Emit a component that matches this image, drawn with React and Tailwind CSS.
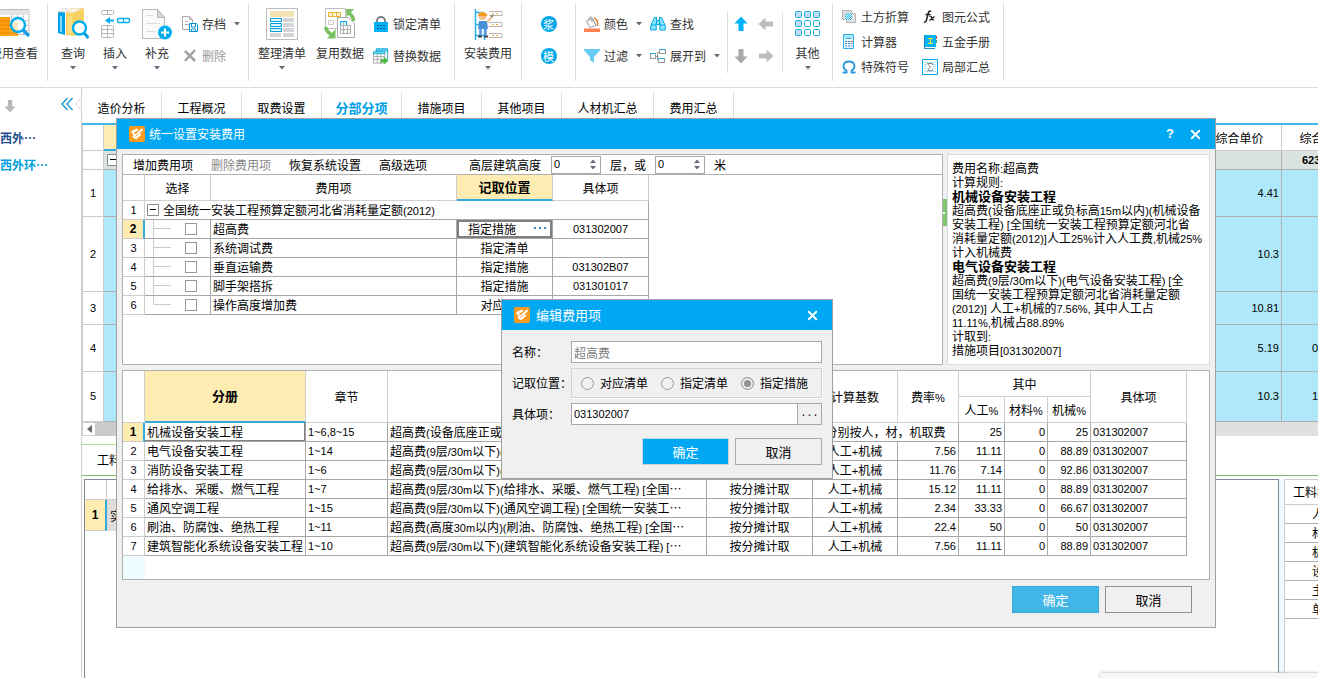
import React, { useState } from "react";
import { X } from "lucide-react";

/* ---------- text helper: Latin runs are set one size smaller than the CJK runs ---------- */
function Mixed({ children }) {
  return String(children)
    .split(/([\x20-\x7e]+)/)
    .map((run, i) =>
      i % 2 ? (
        <span key={i} className="font-['Liberation_Sans',sans-serif] text-[11px] leading-none">
          {run}
        </span>
      ) : (
        run
      )
    );
}

/* ---------- icons ---------- */
const Caret = ({ className = "" }) => (
  <svg className={`h-[4px] w-[6px] shrink-0 ${className}`} viewBox="0 0 6 4" fill="#666a78">
    <path d="M0 0h6L3 3.6z" />
  </svg>
);

const CostViewIcon = () => (
  <svg width="34" height="32" viewBox="0 0 34 32">
    <path d="M1 1.5h31v25H1z" fill="#fff" stroke="#bbb" />
    <path d="M1 2h31v5H1z" fill="#e4e4e0" />
    <path d="M1 12.5h31M1 17.5h31M1 22.5h31M14.5 7v20M20.500 7v20M26.500 7v20" stroke="#ccc" />
    <path d="M2 9h11v19H2z" fill="#ff9f0f" />
    <path d="M12 14h9v14h-9z" fill="#ffa820" />
    <path d="M2 13h11M2 17h11M2 21h19M2 25h19" stroke="#e88800" />
    <circle cx="21" cy="17" r="7" fill="#fff" fillOpacity=".75" stroke="#00aeef" strokeWidth="2.4" />
    <path d="M26 22l6 6" stroke="#1b9de0" strokeWidth="3.2" />
  </svg>
);
const QueryIcon = () => (
  <svg width="32" height="32" viewBox="0 0 32 32">
    <path d="M1 4h7v23l-7-2z" fill="#00a4e4" />
    <path d="M3 8h2v16l-2-.5z" fill="#7fdcff" />
    <path d="M1 4l5-4h5L8 4z" fill="#f4f4f4" stroke="#ccc" strokeWidth=".6" />
    <path d="M9 5h8v23l-8-1z" fill="#ffd666" />
    <path d="M9 5l6-5h11l-8 5z" fill="#f8f4e8" stroke="#e8b93c" strokeWidth=".6" />
    <path d="M17 5l10-5v24l-10 4z" fill="#f9cf62" />
    <path d="M11 9h4v16h-4z" fill="#ffe08a" />
    <circle cx="22.500" cy="20" r="6.500" fill="#fff" stroke="#00aeef" strokeWidth="2.400" />
    <path d="M27 25l4.500 5" stroke="#00a0e0" strokeWidth="3" />
  </svg>
);
const InsertIcon = () => (
  <svg width="32" height="32" viewBox="0 0 32 32" fill="none">
    <rect x="2.500" y="2.500" width="12" height="4" rx="1" stroke="#b5b5b5" />
    <path d="M8.500 2.500v4" stroke="#b5b5b5" />
    <rect x="2.500" y="17.500" width="12" height="12" rx="1" stroke="#b5b5b5" />
    <path d="M8.500 17.500v12M2.500 21.500h12M2.500 25.500h12" stroke="#b5b5b5" />
    <rect x="18.500" y="10.500" width="12" height="4" rx="1" stroke="#00aeef" strokeWidth="1.300" />
    <path d="M24.500 10.500v4" stroke="#00aeef" />
    <path d="M15 12.500h-5" stroke="#00aeef" strokeWidth="2" />
    <path d="M6 12.500l5-3.500v7z" fill="#00aeef" />
  </svg>
);
const SupplementIcon = () => (
  <svg width="32" height="32" viewBox="0 0 32 32" fill="none">
    <path d="M1.500 1.500h15l7 8v21h-22z" fill="#fafafa" stroke="#b8b8b8" />
    <path d="M16.500 1.500l7 8h-7z" fill="#d8d8d8" stroke="#b8b8b8" />
    <path d="M5 7.500h7M5 15.500h14M5 23.500h10" stroke="#ddd" />
    <circle cx="24" cy="24.500" r="7" fill="#00aeef" />
    <path d="M20 24.500h8M24 20.500v8" stroke="#fff" strokeWidth="2" />
  </svg>
);
const ArchiveIcon = () => (
  <svg width="16" height="16" viewBox="0 0 16 16" fill="none">
    <path d="M.5.5h7l3 3v10H.5z" fill="#fff" stroke="#aaa" />
    <path d="M7.500.5v3h3M3 5.500h3M3 8.500h4" stroke="#aaa" />
    <path d="M7.500 7.500h7l1 1v7h-8z" fill="#fff" stroke="#0096d0" />
    <path d="M9.500 8v3h4V8M9.500 15v-2h4v2" stroke="#0096d0" />
  </svg>
);
const DeleteIcon = () => (
  <svg width="16" height="16" viewBox="0 0 16 16" fill="none">
    <path d="M3 3l10 10M13 2L3 13" stroke="#a3a3a3" strokeWidth="2.500" />
  </svg>
);
const TidyIcon = () => (
  <svg width="32" height="32" viewBox="0 0 32 32" fill="none">
    <path d="M.5.5h31v31H.5z" fill="#fff" stroke="#bbb" />
    <path d="M4 3h24v6H4z" fill="#f3e3b4" />
    <path d="M17 10h11v4H17zM17 15h11v4H17zM17 20h11v4H17zM4 25h11v4H4zM17 25h11v4H17z" fill="#d4d4d8" />
    <path d="M4.500 10.500h11v3h-11zM4.500 15.500h11v3h-11zM4.500 20.500h11v3h-11z" fill="#dff6ff" stroke="#009fe0" />
  </svg>
);
const ReuseIcon = () => (
  <svg width="32" height="32" viewBox="0 0 32 32" fill="none">
    <path d="M1.500.5h20v20h-20z" fill="#fff" stroke="#bbb" />
    <path d="M4.500 4.500h12v4h-12zM8.500 4.500v4M12.500 4.500v4" fill="#fff3cf" stroke="#f0b030" />
    <path d="M4.500 12.500h5v4h-5z" stroke="#ccc" />
    <path d="M13.500 9.500h11l6 6v14h-17z" fill="#fff" stroke="#aaa" />
    <path d="M16.500 13.500h6v4h-6z" fill="#dff6ff" stroke="#00aeef" />
    <path d="M16.500 17.500h10v8h-10zM16.500 21.500h10M19.500 13.500v12M23.500 17.500v8" stroke="#b0b0b0" />
    <path d="M29.500 13c0-4-1.500-6-5-8" stroke="#78c060" strokeWidth="3.500" />
    <path d="M22 1h8l-7.500 8z" fill="#78c060" />
    <path d="M1.500 19c1 4 3 6 6 7.500" stroke="#78c060" strokeWidth="3.500" />
    <path d="M11.500 21v9.500H3z" fill="#78c060" />
  </svg>
);
const LockIcon = () => (
  <svg width="16" height="16" viewBox="0 0 16 16" fill="none">
    <path d="M4 7V5a4 4 0 018 0v2" stroke="#747a84" strokeWidth="1.800" />
    <path d="M1 6h14v10H1z" fill="#00b0f8" />
    <path d="M4 9.500h2M7 9.500h2M10 9.500h2M4 12.500h2M7 12.500h2M10 12.500h2" stroke="#0a5c88" />
  </svg>
);
const ReplaceIcon = () => (
  <svg width="17" height="17" viewBox="0 0 17 17" fill="none">
    <path d="M3.500.5h12v11h-12z" fill="#fff" stroke="#2ba8c8" />
    <path d="M3.500.5h12v2h-12z" fill="#9ce4f8" stroke="#00a8d8" />
    <path d="M.5 4.500h12v11H.5z" fill="#fff" stroke="#aaa" />
    <path d="M.5 3.500h12v2H.5z" fill="#9ce4f8" stroke="#00a8d8" />
    <path d="M.5 8.500h12M.5 11.500h12M4.500 6v9M8.500 6v9" stroke="#aaa" />
    <path d="M7.500 16c0-3 1-4.500 4-4.500V9l5 4-5 4v-2.500c-2 0-3 .5-4 1.500z" fill="#4cb83c" />
  </svg>
);
const InstallIcon = () => (
  <svg width="32" height="32" viewBox="0 0 32 32" fill="none">
    <path d="M3.500 1v31M12.500 20v12M3 4.500h9M3 16.500h4M3 27.500h10" stroke="#28b4ea" strokeWidth="1.500" />
    <path d="M17 3.500h13v4H17M17 14.500h13v4H17M17 25.500h13v4H17" stroke="#b5b5b5" />
    <path d="M20 5.500h2M24 5.500h2M20 16.500h2M24 16.500h2M20 27.500h2M24 27.500h2" stroke="#f0b030" />
    <circle cx="10.500" cy="8" r="4" fill="#f3c08c" />
    <path d="M6 8c0-5 9-5 9.500 0z" fill="#f59a1c" />
    <path d="M7 13h8l1 8H6z" fill="#4a90d8" />
    <path d="M15 14l5-5" stroke="#f3c08c" strokeWidth="2" />
    <path d="M19 9l2-2" stroke="#888" strokeWidth="2" />
    <path d="M8.500 21v7M13.500 21v7" stroke="#5a9ae0" strokeWidth="2.600" />
    <path d="M6 28.500h4M12 28.500h4" stroke="#444" strokeWidth="2" />
  </svg>
);
const ColorIcon = () => (
  <svg width="16" height="16" viewBox="0 0 16 16" fill="none">
    <path d="M2.500 5l6-2.500 3.500 7-6 2z" fill="#fff" stroke="#999" />
    <path d="M5 4V2.500C5 .5 8 .5 8 2.500V6" stroke="#888" />
    <path d="M10 2c3 1 4 4 3.500 8" stroke="#e08030" strokeWidth="1.500" />
    <path d="M0 12.500h16V16H0z" fill="#ff7f50" />
  </svg>
);
const FilterIcon = () => (
  <svg width="16" height="16" viewBox="0 0 16 16">
    <path d="M0 1h16v1.500L10 9v6l-4-3V9L0 2.500z" fill="#68ccf0" />
  </svg>
);
const FindIcon = () => (
  <svg width="16" height="16" viewBox="0 0 16 16" fill="#8ce4ff" stroke="#00a8e0">
    <path d="M4.500 1.500h2v5l-1 3h-4V8zM11.500 1.500h-2v5l1 3h4V8z" />
    <path d="M.8 9h5.400v5H.8zM9.800 9h5.400v5H9.800zM6.500 4.500h3v4h-3z" />
  </svg>
);
const ExpandIcon = () => (
  <svg width="16" height="16" viewBox="0 0 16 16" fill="#fff">
    <path d="M6 8.500h2.500M7.500 4.500h2M7.500 4.500v7.500h2" stroke="#999" fill="none" />
    <rect x=".5" y="5.500" width="5" height="5" stroke="#999" />
    <rect x="9.500" y="1.500" width="6" height="4" stroke="#999" />
    <rect x="8.500" y="10.500" width="6" height="4" stroke="#999" />
    <path d="M0 5.500h6M9 1.500h7M8 10.500h7" stroke="#25a8dc" />
  </svg>
);
const Arrow = ({ color, turn = "" }) => (
  <svg width="14" height="16" viewBox="0 0 14 16" fill={color} className={turn}>
    <path d="M7 .5l6.500 7H9.500V15h-5V7.500h-4z" />
  </svg>
);
const GridIcon = () => (
  <svg width="26" height="26" viewBox="0 0 26 26" stroke="#18a8e0">
    {[0, 9, 18].map((y) =>
      [0, 9, 18].map((x) => (
        <rect key={`${x}-${y}`} x={x + 0.5} y={y + 0.5} width="6" height="6" rx="1" fill={x === 0 || y === 0 ? "#c4dcf0" : "#fff"} />
      ))
    )}
  </svg>
);
const EarthIcon = () => (
  <svg width="16" height="16" viewBox="0 0 16 16" fill="none">
    <path d="M1.500 1.500h9v9h-9z" fill="#ddd" stroke="#b4b4b4" />
    <path d="M5.500 4.500h9v9h-9z" fill="#e4e4e4" stroke="#b4b4b4" />
    <path d="M4 4h7v7H4z" fill="#e8faff" />
    <path d="M4 6l2-2M4 8l4-4M4 10l6-6M5 11l6-6M7 11l4-4M9 11l2-2" stroke="#20b4ec" />
  </svg>
);
const CalcIcon = () => (
  <svg width="16" height="16" viewBox="0 0 16 16" fill="none">
    <path d="M2.500.5h10v14h-10z" fill="#eef8ff" stroke="#2cb0ec" />
    <path d="M3 1h9v3H3z" fill="#a8e4fa" />
    <path d="M4.500 4.500h6" stroke="#2cb0ec" />
    <path d="M4 7.500h2M7 7.500h2M4 9.500h2M7 9.500h2M10 9.500h1.500M4 12h2M7 12h2M10 12h1.500" stroke="#3c88d8" />
    <path d="M10 7.500h2" stroke="#f05040" />
  </svg>
);
const OmegaIcon = () => (
  <svg width="16" height="16" viewBox="0 0 16 16" fill="none" stroke="#2a98d8" strokeWidth="1.800">
    <path d="M1.500 13.500h4v-2C1 9 1.500 2.500 8 2.500s7 6.500 2.500 9v2h4" />
  </svg>
);
const FxIcon = () => (
  <svg width="16" height="16" viewBox="0 0 16 16" fill="none" stroke="#222">
    <path d="M9 2.500C7.500 1.500 6.500 2.500 6 5L4.500 11c-.5 2-1.500 2.500-2.500 1.800M3.500 5.500h5" strokeWidth="1.500" />
    <path d="M7.500 7.500c1.500-.8 2 0 2.300 1.500s.7 2.500 2.200 1.500M12.500 7.500L7.500 11.500" strokeWidth="1.300" />
  </svg>
);
const ManualIcon = () => (
  <svg width="16" height="16" viewBox="0 0 16 16" fill="none">
    <path d="M2 1h12v12H2z" fill="#00b4f8" />
    <path d="M2.500 1v13.500H13" stroke="#1a8cc0" />
    <path d="M6 4.500h5M8.500 4.500v5M6 9.500h5" stroke="#ffe838" strokeWidth="1.200" />
    <path d="M14.500 2v3" stroke="#e04040" />
    <path d="M14.500 6v3" stroke="#30b070" />
  </svg>
);
const SumIcon = () => (
  <svg width="16" height="16" viewBox="0 0 16 16" fill="none">
    <path d="M.5.5h15v15H.5z" fill="#fff" stroke="#00a8ec" />
    <path d="M2 3.500h12M2 5.500h3M11 5.500h3M2 7.500h3M11 7.500h3M2 9.500h3M11 9.500h3M2 12.500h12" stroke="#a8e0f4" />
    <path d="M10.500 6V4.500h-5L8.500 8l-3 3.500h5V10" stroke="#8a8a8a" />
  </svg>
);
const AppIcon = () => (
  <svg className="h-4 w-4 shrink-0" viewBox="0 0 16 16" fill="none">
    <rect width="16" height="16" rx="2" fill="#fa9a1e" />
    <path d="M2.500 5L8 2.500 9.500 4 5 6.800l.8 1.400L9 6.500l3.500 2L7 13.500 3.500 11l1-2.500L2.500 7z" fill="#fff" />
    <path d="M13.500 3L8 8.500" stroke="#fff" strokeWidth="2" />
    <path d="M6.500 10.500l3-2.500" stroke="#fa9a1e" />
  </svg>
);
const CollapseIcon = () => (
  <svg width="12" height="14" viewBox="0 0 12 14" fill="none" stroke="#1a9ccc" strokeWidth="1.400">
    <path d="M6.500 1l-5.500 6 5.500 6M11.500 1L6 7l5.500 6" />
  </svg>
);
const Minus = ({ className = "" }) => (
  <svg className={`h-3 w-3 shrink-0 ${className}`} viewBox="0 0 12 12" fill="none">
    <path d="M.5.5h11v11H.5z" fill="#fff" stroke="#8c8c8c" />
    <path d="M3 5.500h6" stroke="#000" />
  </svg>
);

/* ---------- ribbon ---------- */
function BigButton({ icon, label, caret = true, className = "w-[42px]" }) {
  return (
    <button type="button" className={`flex shrink-0 flex-col items-center pt-2 ${className}`}>
      <span className="flex h-8 items-center justify-center">{icon}</span>
      <span className="mt-1 leading-[18px] whitespace-nowrap">{label}</span>
      {caret && <Caret className="mt-1" />}
    </button>
  );
}
function SmallButton({ icon, label, caret, muted }) {
  return (
    <button type="button" className={`flex h-5 items-center gap-1 whitespace-nowrap ${muted ? "text-[#999]" : ""}`}>
      <span className="flex w-4 shrink-0 justify-center">{icon}</span>
      <span>{label}</span>
      {caret && <Caret className="ml-1" />}
    </button>
  );
}
const Group = ({ className = "", children }) => (
  <div className={`flex h-[78px] shrink-0 border-r border-[#dcdcdc] ${className}`}>
    <div className="-mt-[3px] flex">{children}</div>
  </div>
);
const Stack = ({ className = "", children }) => (
  <div className={`flex flex-col gap-3 pt-[14px] ${className}`}>{children}</div>
);
const ShortRule = () => <div className="mt-3 h-[61px] w-px bg-[#dcdcdc]" />;

function Ribbon() {
  return (
    <header className="flex h-[88px] shrink-0 overflow-hidden border-b border-[#dcdcdc] pt-[3px] text-[#333]">
      <Group className="w-12 justify-end pr-[9px]">
        <BigButton icon={<CostViewIcon />} label="费用查看" caret={false} className="w-12" />
      </Group>
      <Group className="w-[201px] pl-1">
        <BigButton icon={<QueryIcon />} label="查询" />
        <BigButton icon={<InsertIcon />} label="插入" />
        <BigButton icon={<SupplementIcon />} label="补充" />
        <Stack className="pl-1">
          <SmallButton icon={<ArchiveIcon />} label="存档" caret />
          <SmallButton icon={<DeleteIcon />} label="删除" muted />
        </Stack>
      </Group>
      <Group className="w-[206px] pl-1">
        <BigButton icon={<TidyIcon />} label="整理清单" className="w-[58px]" />
        <BigButton icon={<ReuseIcon />} label="复用数据" caret={false} className="w-[58px]" />
        <Stack className="pl-1">
          <SmallButton icon={<LockIcon />} label="锁定清单" />
          <SmallButton icon={<ReplaceIcon />} label="替换数据" />
        </Stack>
      </Group>
      <Group className="w-[67px]">
        <BigButton icon={<InstallIcon />} label="安装费用" className="w-[66px]" />
      </Group>
      <Group className="w-[54px] justify-center">
        <Stack>
          {["浆", "模"].map((c) => (
            <button key={c} type="button" className="flex h-5 items-center">
              <span className="flex h-4 w-4 items-center justify-center rounded-full bg-[#00a8e8] text-[11px] leading-4 text-white">{c}</span>
            </button>
          ))}
        </Stack>
      </Group>
      <Group className="w-[257px] pl-2">
        <Stack className="w-[66px]">
          <SmallButton icon={<ColorIcon />} label="颜色" caret />
          <SmallButton icon={<FilterIcon />} label="过滤" caret />
        </Stack>
        <Stack className="w-[77px]">
          <SmallButton icon={<FindIcon />} label="查找" />
          <SmallButton icon={<ExpandIcon />} label="展开到" caret />
        </Stack>
        <ShortRule />
        <div className="grid w-[54px] grid-cols-[26px_24px] grid-rows-[32px_32px] place-items-center pt-2">
          <button type="button" aria-label="上移"><Arrow color="#00b0f8" /></button>
          <button type="button" aria-label="左移"><Arrow color="#bdbdbd" turn="-rotate-90" /></button>
          <button type="button" aria-label="下移"><Arrow color="#a8a8a8" turn="rotate-180" /></button>
          <button type="button" aria-label="右移"><Arrow color="#bdbdbd" turn="rotate-90" /></button>
        </div>
        <ShortRule />
        <BigButton icon={<GridIcon />} label="其他" className="w-[49px]" />
      </Group>
      <Group className="w-[171px] pl-2">
        <div className="grid grid-cols-[81px_70px] content-start gap-y-[5px] pt-[7px]">
          <SmallButton icon={<EarthIcon />} label="土方折算" />
          <SmallButton icon={<FxIcon />} label="图元公式" />
          <SmallButton icon={<CalcIcon />} label="计算器" />
          <SmallButton icon={<ManualIcon />} label="五金手册" />
          <SmallButton icon={<OmegaIcon />} label="特殊符号" />
          <SmallButton icon={<SumIcon />} label="局部汇总" />
        </div>
      </Group>
    </header>
  );
}

/* ---------- workspace behind the dialogs ---------- */
const TABS = ["造价分析", "工程概况", "取费设置", "分部分项", "措施项目", "其他项目", "人材机汇总", "费用汇总"];
const MAIN_ROWS = [
  { n: 1, h: "h-[47px]", price: "4.41", total: "" },
  { n: 2, h: "h-[75px]", price: "10.3", total: "" },
  { n: 3, h: "h-[33px]", price: "10.81", total: "" },
  { n: 4, h: "h-[47px]", price: "5.19", total: "0" },
  { n: 5, h: "h-[50px]", price: "10.3", total: "12" },
];

function Sidebar() {
  return (
    <aside className="flex w-[82px] shrink-0 flex-col border-r border-[#d0d0d0]">
      <div className="flex h-9 items-center justify-between pl-1">
        <button type="button" aria-label="下移"><Arrow color="#b8b8b8" turn="h-[14px] w-3 rotate-180" /></button>
        <span className="flex items-center gap-[2px] pb-1">
          <button type="button" aria-label="收起" className="flex"><CollapseIcon /></button>
          <svg width="6" height="12" viewBox="0 0 6 12" fill="none" stroke="#d4d4d4"><path d="M6 .5L.7 6 6 11.500" /></svg>
        </span>
      </div>
      <a href="#west" className="block h-[27px] leading-7 font-bold text-[#1f4e8c]">西外…</a>
      <a href="#ring" className="block h-[27px] leading-7 font-bold text-[#00a0dc]">西外环…</a>
    </aside>
  );
}

function MainGrid() {
  return (
    <div className="overflow-hidden">
      <table className="w-[calc(100%+48px)] table-fixed border-separate border-spacing-0">
        <colgroup>
          <col className="w-[22px]" />
          <col className="w-[12px]" />
          <col />
          <col className="w-[84px]" />
          <col className="w-[84px]" />
        </colgroup>
        <thead>
          <tr className="h-[26px]">
            <th className="border-r border-b border-l border-[#ccc]" />
            <th className="border-b-2 border-[#35a8dc] bg-[#ffecb3]" />
            <th className="border-r border-b border-[#ccc]" />
            <th className="border-r border-b border-[#ccc] font-normal">综合单价</th>
            <th className="border-r border-b border-[#ccc] font-normal">综合合价</th>
          </tr>
          <tr className="h-[19px] bg-[#dbe3df]">
            <td className="border-r border-b border-l border-[#ccc] bg-white" />
            <td className="border-b border-[#b0b0b0] p-0"><Minus className="ml-[3px]" /></td>
            <td className="border-r border-b border-[#b0b0b0]" />
            <td className="border-r border-b border-[#b0b0b0]" />
            <td className="border-r border-b border-[#b0b0b0] p-0 pl-5 font-['Liberation_Sans',sans-serif] text-[11px] font-bold">6230.55</td>
          </tr>
        </thead>
        <tbody className="bg-[#aee8fa] font-['Liberation_Sans',sans-serif] text-[11px]">
          {MAIN_ROWS.map((r) => (
            <tr key={r.n} className={r.h}>
              <td className="border-r border-b border-l border-[#ccc] bg-white p-0 text-center">{r.n}</td>
              <td className="border-b border-[#b0b0b0]" />
              <td className="border-r border-b border-[#b0b0b0]" />
              <td className="border-r border-b border-[#b0b0b0] p-0 pr-[2px] text-right">{r.price}</td>
              <td className="border-r border-b border-[#b0b0b0] p-0 pl-[30px]">{r.total}</td>
            </tr>
          ))}
        </tbody>
      </table>
      <div className="flex h-[14px] bg-[#e0e0e0]">
        <button type="button" aria-label="向左滚动" className="flex w-[14px] items-center justify-center border border-[#ccc] bg-white">
          <svg width="5" height="8" viewBox="0 0 5 8" fill="#666"><path d="M5 0v8L0 4z" /></svg>
        </button>
        <div className="w-1/2 bg-[#cacaca]" />
      </div>
    </div>
  );
}

function BottomPane() {
  return (
    <div className="flex min-h-0 flex-1 pt-[3px]">
      <div className="ml-[2px] flex-1 border-x border-t border-[#808890]">
        <table className="w-[322px] table-fixed border-separate border-spacing-0">
          <colgroup><col className="w-[22px]" /><col /></colgroup>
          <tbody>
            <tr className="h-5">
              <th className="border-r border-b border-[#ccc]" />
              <th className="border-b border-[#ccc]" />
            </tr>
            <tr className="h-[31px]">
              <td className="border-r-2 border-b border-r-[#35a8dc] border-b-[#ccc] bg-[#ffecb3] p-0 text-center font-['Liberation_Sans',sans-serif] font-bold">1</td>
              <td className="bg-[#e0dcdc] p-0 pl-[3px]">实体项目</td>
            </tr>
          </tbody>
        </table>
      </div>
      <div className="w-[5px] bg-[#eefaff]" />
      <div className="w-[34px] overflow-hidden border-t border-l border-[#ccc]">
        <table className="w-[110px] table-fixed border-separate border-spacing-0">
          <thead>
            <tr className="h-[25px]"><th className="border-b border-[#ccc] p-0 pl-2 text-left font-normal">工料机类别</th></tr>
          </thead>
          <tbody>
            {["人工", "材料", "机械", "设备", "主材", "单价"].map((t) => (
              <tr key={t} className="h-[19px]"><td className="border-b border-[#b0b0b0] p-0 pl-[27px] leading-[18px]">{t}</td></tr>
            ))}
          </tbody>
        </table>
      </div>
    </div>
  );
}

function Workspace() {
  return (
    <div className="flex min-h-0 flex-1">
      <Sidebar />
      <main className="flex min-w-0 flex-1 flex-col">
        <nav className="flex h-[37px] items-start border-b-2 border-[#45b6e6] pt-1">
          {TABS.map((t) => (
            <a
              key={t}
              href={`#${t}`}
              className={`flex h-[31px] items-center justify-center border-r border-[#dcdcdc] ${t.length > 4 ? "w-[92px]" : "w-20"} ${
                t === "分部分项" ? "text-[13px] font-bold text-[#00a0e8]" : ""
              }`}
            >
              {t}
            </a>
          ))}
        </nav>
        <MainGrid />
        <div className="mt-2 flex h-8 items-center border-b border-[#7cc06c]">
          <a href="#detail" className="flex h-full w-[110px] items-center border-t border-[#a8e08c] pl-[15px]">工料机显示</a>
        </div>
        <BottomPane />
      </main>
    </div>
  );
}

/* ---------- shared dialog parts ---------- */
function TitleBar({ title, help, big }) {
  return (
    <div className="flex h-[30px] items-center bg-[#00a8f3] pr-3 pl-3 text-white">
      <AppIcon />
      <h2 className={`flex-1 font-normal ${big ? "pl-[6px] text-[13px]" : "pl-1"}`}>{title}</h2>
      {help && <button type="button" aria-label="帮助" className="mr-[11px] w-3 font-['Liberation_Sans',sans-serif] text-[13px] font-bold">?</button>}
      <button type="button" aria-label="关闭" className="flex w-4 justify-center"><X size={15} strokeWidth={3.2} /></button>
    </div>
  );
}

function Spin({ id, label }) {
  const [value, setValue] = useState(0);
  return (
    <div className="flex h-[18px] w-[50px] border border-[#a8a8a8] bg-white">
      <input
        id={id}
        aria-label={label}
        value={value}
        onChange={(e) => setValue(Number(e.target.value) || 0)}
        className="w-0 flex-1 pl-[2px] font-['Liberation_Sans',sans-serif] text-[11px] outline-none"
      />
      <div className="flex w-[14px] flex-col items-center justify-center gap-[3px]">
        <button type="button" aria-label="增加" className="flex" onClick={() => setValue(value + 1)}><Caret className="rotate-180" /></button>
        <button type="button" aria-label="减少" className="flex" onClick={() => setValue(Math.max(0, value - 1))}><Caret /></button>
      </div>
    </div>
  );
}

/* ---------- fee settings dialog ---------- */
const FEES = [
  { n: 2, name: "超高费", pos: "指定措施", code: "031302007", active: true },
  { n: 3, name: "系统调试费", pos: "指定清单", code: "" },
  { n: 4, name: "垂直运输费", pos: "指定措施", code: "031302B07" },
  { n: 5, name: "脚手架搭拆", pos: "指定措施", code: "031301017" },
  { n: 6, name: "操作高度增加费", pos: "对应清单", code: "" },
];

const TH = "border-r border-b border-[#d0d0d0] p-0 font-normal";
const TD = "border-r border-b border-[#a8a8a8] p-0 leading-[18px]";
const NUM = "border-r border-b border-[#ccc] p-0 text-center leading-[18px] font-['Liberation_Sans',sans-serif] text-[11px]";
const NUM_ON = "border-r-2 border-b border-r-[#35a8dc] border-b-[#ccc] bg-[#ffecb3] p-0 text-center leading-[18px] font-['Liberation_Sans',sans-serif] text-xs font-bold";
const DIGITS = "font-['Liberation_Sans',sans-serif] text-[11px]";

function FeeTable() {
  return (
    <table className="w-[526px] table-fixed border-separate border-spacing-0">
      <colgroup>
        <col className="w-[22px]" />
        <col className="w-[66px]" />
        <col />
        <col className="w-24" />
        <col className="w-24" />
      </colgroup>
      <thead>
        <tr className="h-[26px]">
          <th className={TH} />
          <th className={TH}>选择</th>
          <th className={TH}>费用项</th>
          <th className="border-r border-b-2 border-r-[#d0d0d0] border-b-[#35a8dc] bg-[#ffecb3] p-0 text-[13px] font-bold">记取位置</th>
          <th className={TH}>具体项</th>
        </tr>
      </thead>
      <tbody>
        <tr className="h-[19px]">
          <td className={NUM}>1</td>
          <td colSpan={4} className={TD}>
            <div className="flex items-center gap-1 pl-[2px]">
              <Minus />
              <span className="leading-[18px]"><Mixed>全国统一安装工程预算定额河北省消耗量定额(2012)</Mixed></span>
            </div>
          </td>
        </tr>
        {FEES.map((f, i) => (
          <tr key={f.n} className="h-[19px]">
            <td className={f.active ? NUM_ON : NUM}>{f.n}</td>
            <td className={TD}>
              <div className="flex h-[18px] gap-[14px] pl-2">
                <svg width="18" height="18" viewBox="0 0 18 18" stroke="#ccc" fill="none">
                  <path d={i === FEES.length - 1 ? "M.5 0v8.500H18" : "M.5 0v18M.5 8.500H18"} />
                </svg>
                <input type="checkbox" aria-label={f.name} className="mt-[3px] h-3 w-3 appearance-none border border-[#999] bg-white checked:bg-[#35a8dc]" />
              </div>
            </td>
            <td className={`${TD} pl-[2px]`}>{f.name}</td>
            {f.active ? (
              <td className={`${TD} shadow-[inset_0_0_0_2px_#808080]`}>
                <div className="flex items-center justify-between pr-[6px] pl-[11px]">
                  <span>{f.pos}</span>
                  <button type="button" aria-label="编辑" className="flex">
                    <svg width="12" height="4" viewBox="0 0 12 4" fill="#3a8ac8"><path d="M0 0h2v2H0zM5 0h2v2H5zM10 0h2v2h-2z" /></svg>
                  </button>
                </div>
              </td>
            ) : (
              <td className={`${TD} text-center`}>{f.pos}</td>
            )}
            <td className={`${TD} ${DIGITS} text-center`}>{f.code}</td>
          </tr>
        ))}
      </tbody>
    </table>
  );
}

function RuleText() {
  const lines = [
    ["费用名称:超高费"],
    ["计算规则:"],
    ["机械设备安装工程", true],
    ["超高费(设备底座正或负标高15m以内)(机械设备"],
    ["安装工程) [全国统一安装工程预算定额河北省"],
    ["消耗量定额(2012)]人工25%计入人工费,机械25%"],
    ["计入机械费"],
    ["电气设备安装工程", true],
    ["超高费(9层/30m以下)(电气设备安装工程) [全"],
    ["国统一安装工程预算定额河北省消耗量定额"],
    ["(2012)] 人工+机械的7.56%, 其中人工占"],
    ["11.11%,机械占88.89%"],
    ["计取到:"],
    ["措施项目[031302007]"],
  ];
  return (
    <div className="w-[263px] shrink-0 overflow-hidden border border-[#d8dce4] bg-white pt-[6px] pl-1 leading-[14px] whitespace-nowrap">
      {lines.map(([t, bold]) => (
        <p key={t} className={bold ? "text-[13px] leading-[14px] font-bold" : ""}><Mixed>{t}</Mixed></p>
      ))}
    </div>
  );
}

const BOOKS = [
  { n: 1, book: "机械设备安装工程", ch: "1~6,8~15", rule: "超高费(设备底座正或负标高15m以内)(机械设备…", a: "25", b: "0", c: "25", merged: "分别按人，材，机取费" },
  { n: 2, book: "电气设备安装工程", ch: "1~14", rule: "超高费(9层/30m以下)(电气设备安装工程) [全国…", rate: "7.56", a: "11.11", b: "0", c: "88.89" },
  { n: 3, book: "消防设备安装工程", ch: "1~6", rule: "超高费(9层/30m以下)(消防设备安装工程) [全国…", rate: "11.76", a: "7.14", b: "0", c: "92.86" },
  { n: 4, book: "给排水、采暖、燃气工程", ch: "1~7", rule: "超高费(9层/30m以下)(给排水、采暖、燃气工程) [全国…", rate: "15.12", a: "11.11", b: "0", c: "88.89" },
  { n: 5, book: "通风空调工程", ch: "1~15", rule: "超高费(9层/30m以下)(通风空调工程) [全国统一安装工…", rate: "2.34", a: "33.33", b: "0", c: "66.67" },
  { n: 6, book: "刷油、防腐蚀、绝热工程", ch: "1~11", rule: "超高费(高度30m以内)(刷油、防腐蚀、绝热工程) [全国…", rate: "22.4", a: "50", b: "0", c: "50" },
  { n: 7, book: "建筑智能化系统设备安装工程", ch: "1~10", rule: "超高费(9层/30m以下)(建筑智能化系统设备安装工程) […", rate: "7.56", a: "11.11", b: "0", c: "88.89" },
];

function BookTable() {
  return (
    <table className="w-[1064px] table-fixed border-separate border-spacing-0 whitespace-nowrap">
      <colgroup>
        <col className="w-[22px]" />
        <col className="w-[161px]" />
        <col className="w-[82px]" />
        <col className="w-[319px]" />
        <col className="w-[106px]" />
        <col className="w-[85px]" />
        <col className="w-[61px]" />
        <col className="w-[46px]" />
        <col className="w-[43px]" />
        <col className="w-[43px]" />
        <col className="w-24" />
      </colgroup>
      <thead>
        <tr className="h-[26px]">
          <th rowSpan={2} className={TH} />
          <th rowSpan={2} className="border-r border-b-2 border-r-[#d0d0d0] border-b-[#35a8dc] bg-[#ffecb3] p-0 text-[13px] font-bold">分册</th>
          <th rowSpan={2} className={TH}>章节</th>
          <th rowSpan={2} className={TH}>计算规则</th>
          <th rowSpan={2} className={TH}>计取方式</th>
          <th rowSpan={2} className={TH}>计算基数</th>
          <th rowSpan={2} className={TH}><Mixed>费率%</Mixed></th>
          <th colSpan={3} className={TH}>其中</th>
          <th rowSpan={2} className={TH}>具体项</th>
        </tr>
        <tr className="h-[26px]">
          <th className={TH}><Mixed>人工%</Mixed></th>
          <th className={TH}><Mixed>材料%</Mixed></th>
          <th className={TH}><Mixed>机械%</Mixed></th>
        </tr>
      </thead>
      <tbody>
        {BOOKS.map((r) => (
          <tr key={r.n} className="h-[19px]">
            <td className={r.n === 1 ? NUM_ON : NUM}>{r.n}</td>
            <td className={`${TD} pl-[2px] ${r.n === 1 ? "shadow-[inset_-1px_-1px_0_0_#808080]" : ""}`}>{r.book}</td>
            <td className={`${TD} ${DIGITS} pl-[2px]`}>{r.ch}</td>
            <td className={`${TD} overflow-hidden pl-[2px]`}><Mixed>{r.rule}</Mixed></td>
            <td className={`${TD} text-center`}>{r.merged ? "" : "按分摊计取"}</td>
            {r.merged ? (
              <td colSpan={2} className={`${TD} text-center`}>{r.merged}</td>
            ) : (
              <>
                <td className={`${TD} text-center`}><Mixed>人工+机械</Mixed></td>
                <td className={`${TD} ${DIGITS} pr-[2px] text-right`}>{r.rate}</td>
              </>
            )}
            <td className={`${TD} ${DIGITS} pr-[2px] text-right`}>{r.a}</td>
            <td className={`${TD} ${DIGITS} pr-[2px] text-right`}>{r.b}</td>
            <td className={`${TD} ${DIGITS} pr-[2px] text-right`}>{r.c}</td>
            <td className={`${TD} ${DIGITS} pl-[2px]`}>031302007</td>
          </tr>
        ))}
      </tbody>
    </table>
  );
}

function FeeDialog() {
  return (
    <section role="dialog" aria-label="统一设置安装费用" className="absolute top-[118px] right-[102px] left-[116px] border border-[#a0a0a0] bg-[#f0f0f0]">
      <TitleBar title="统一设置安装费用" help />
      <div className="px-[5px] pt-[5px]">
        <div className="flex">
          <div className="flex min-h-[211px] min-w-0 flex-1 flex-col border border-[#b0b0b0] bg-white">
            <div className="flex h-5 items-center border-b border-[#b0b0b0] pl-[10px] whitespace-nowrap">
              <div className="flex gap-[18px]">
                <button type="button">增加费用项</button>
                <button type="button" disabled className="text-[#888]">删除费用项</button>
                <button type="button">恢复系统设置</button>
                <button type="button">高级选项</button>
              </div>
              <label htmlFor="floors" className="pr-[10px] pl-[42px]">高层建筑高度</label>
              <Spin id="floors" label="层数" />
              <span className="px-[9px]">层，或</span>
              <Spin id="metres" label="米数" />
              <span className="pl-[9px]">米</span>
            </div>
            <FeeTable />
          </div>
          <div className="flex w-1 shrink-0 flex-col pt-[45px]">
            <div className="flex h-[27px] items-center bg-[#80c46c]"><span className="h-[2px] w-[2px] bg-white" /></div>
          </div>
          <RuleText />
        </div>
        <div className="mt-[5px] overflow-hidden border border-[#b0b0b0] bg-white">
          <BookTable />
          <div className="h-[23px] w-[22px] bg-[#eefcff]" />
        </div>
        <div className="flex justify-end gap-[6px] pt-[6px] pr-[18px] pb-[14px]">
          <button type="button" className="h-[27px] w-[87px] border border-[#3aa8d8] bg-[#42b6e6] text-[13px] text-white">确定</button>
          <button type="button" className="h-[27px] w-[87px] border border-[#909090] bg-[#f0f0f0] text-[13px]">取消</button>
        </div>
      </div>
    </section>
  );
}

/* ---------- edit dialog ---------- */
function EditDialog() {
  const [pos, setPos] = useState("指定措施");
  return (
    <section role="dialog" aria-label="编辑费用项" className="absolute top-[299px] left-[501px] w-[332px] border border-[#a0a0a0] bg-[#f0f0f0]">
      <TitleBar title="编辑费用项" big />
      <form className="px-[10px] pt-[11px] pb-[13px]" onSubmit={(e) => e.preventDefault()}>
        <div className="grid grid-cols-[59px_1fr] items-center gap-y-[5px]">
          <label htmlFor="fee-name">名称：</label>
          <input id="fee-name" defaultValue="超高费" disabled className="h-[22px] border border-[#a8a8a8] bg-white px-[2px] text-[#808080]" />
          <span id="pos-label" className="whitespace-nowrap">记取位置：</span>
          <div role="radiogroup" aria-labelledby="pos-label" className="flex h-[30px] items-center border border-[#d4d4d4] pl-[9px] shadow-[1px_1px_0_0_#fff]">
            {["对应清单", "指定清单", "指定措施"].map((o) => (
              <label key={o} className="flex w-20 shrink-0 items-center gap-[6px] whitespace-nowrap">
                <input
                  type="radio"
                  name="pos"
                  checked={pos === o}
                  onChange={() => setPos(o)}
                  className="h-[13px] w-[13px] shrink-0 appearance-none rounded-full border border-[#999] checked:bg-[#909090] checked:shadow-[inset_0_0_0_2px_#f0f0f0]"
                />
                {o}
              </label>
            ))}
          </div>
          <label htmlFor="fee-item">具体项：</label>
          <div className="flex h-[22px]">
            <input id="fee-item" defaultValue="031302007" className="w-0 flex-1 border border-[#a8a8a8] bg-white px-[2px] font-['Liberation_Sans',sans-serif] text-[11px] outline-none" />
            <button type="button" aria-label="选择具体项" className="w-6 border border-l-0 border-[#a8a8a8] font-['Liberation_Mono',monospace] text-[10px] leading-5">...</button>
          </div>
        </div>
        <div className="mt-[13px] flex justify-end gap-[6px]">
          <button type="submit" className="h-[27px] w-[87px] border border-[#c8d4dc] bg-[#00a8f3] text-[13px] text-white">确定</button>
          <button type="button" className="h-[27px] w-[87px] border border-[#a8a8a8] bg-[#f0f0f0] text-[13px]">取消</button>
        </div>
      </form>
    </section>
  );
}

export default function App() {
  return (
    <div lang="zh-CN" className="relative flex h-screen flex-col overflow-hidden bg-white font-['Noto_Sans_CJK_SC',sans-serif] text-xs text-black">
      <Ribbon />
      <Workspace />
      <FeeDialog />
      <EditDialog />
      <div className="absolute right-0 bottom-0 h-[5px] w-[218px] bg-[#f6f6f6] shadow-[0_0_3px_#999]" />
    </div>
  );
}
